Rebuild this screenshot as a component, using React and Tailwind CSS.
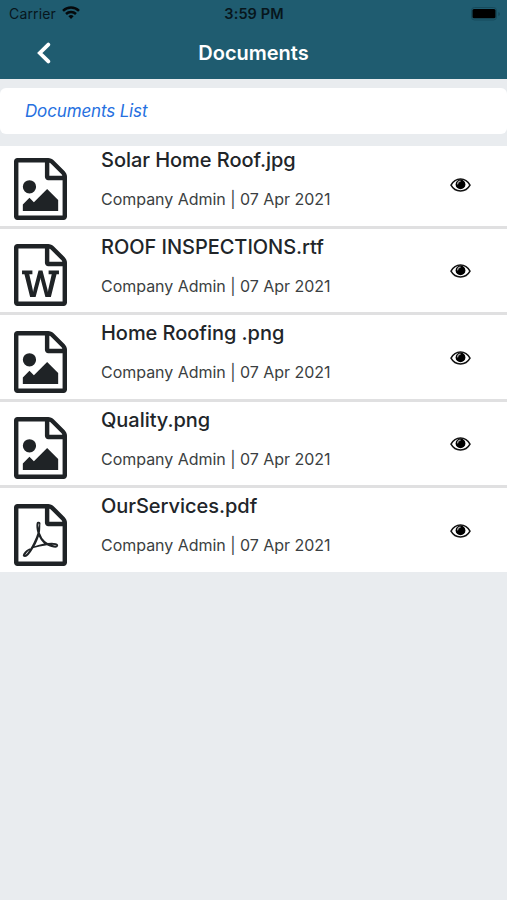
import React from "react";

const documents = [
  { id: 1, name: "Solar Home Roof.jpg", type: "image" },
  { id: 2, name: "ROOF INSPECTIONS.rtf", type: "word" },
  { id: 3, name: "Home Roofing .png", type: "image" },
  { id: 4, name: "Quality.png", type: "image" },
  { id: 5, name: "OurServices.pdf", type: "pdf" },
];

const filePage =
  "M1468 380q28 28 48 76t20 88v1152q0 40-28 68t-68 28h-1344q-40 0-68-28t-28-68v-1600q0-40 28-68t68-28h896q40 0 88 20t76 48zM1024 136v376h376q-10-29-22-41l-313-313q-12-12-41-22zM1408 1664v-1024h-416q-40 0-68-28t-28-68v-416h-768v1536h1280z";

const fileMarks = {
  image:
    "M1280 1216v320h-1024v-192l192-192 128 128 384-384zM448 1024q-80 0-136-56t-56-136 56-136 136-56 136 56 56 136-56 136-136 56z",
  word: "M233 768v107h70l164 661h159l128-485q7-20 10-46 2-16 2-24h4l3 24q1 3 3.5 20t5.5 26l128 485h159l164-661h70v-107h-300v107h90l-99 438q-5 20-7 46l-2 21h-4q0-3-.5-6.5t-1.5-8-1-6.5q-1-5-4-21t-5-25l-144-545h-114l-144 545q-2 9-4.5 24.5t-3.5 21.5l-4 21h-4l-2-21q-2-26-7-46l-99-438h90v-107h-300z",
  pdf: "M894 1070q33 26 84 56 59-7 117-7 147 0 177 49 16 22 2 52 0 1-1 2l-2 2v1q-6 38-71 38-48 0-115-20t-130-53q-221 24-392 83-153 262-242 262-15 0-28-7l-24-12q-1-1-6-5-10-10-6-36 9-40 56-91.5t132-96.5q14-9 23 6 2 2 2 4 52-85 107-197 68-136 104-262-24-82-30.5-159.5t6.5-127.5q11-40 42-40h22q23 0 35 15 18 21 9 68-2 6-4 8 1 3 1 8v30q-2 123-14 192 55 164 146 238zm-576 411q52-24 137-158-51 40-87.5 84t-49.5 74zm398-920q-15 42-2 132 1-7 7-44 0-3 7-43 1-4 4-8-1-1-1-2t-1-2-1-3q-1-22-13-36 0 1-1 2v2zm-124 661q135-54 284-81-2-1-13-9.5t-16-13.5q-76-67-127-176-27 86-83 197-30 56-45 83zm646-16q-24-24-140-24 76 28 124 28 14 0 18-1 0-1-2-3z",
};

const FileIcon = ({ type }) => (
  <svg viewBox="0 0 1536 1792" className="w-[53px] h-[62px] shrink-0 fill-[#1f2326]">
    <path d={filePage} />
    <path d={fileMarks[type]} />
  </svg>
);

const EyeIcon = () => (
  <svg viewBox="0 0 21 14" className="w-[21px] h-[14px]" fill="none">
    <path d="M1 7.2C3 3.4 6.4 1 10.5 1S18 3.4 20 7.2C18 10.8 14.6 13 10.5 13S3 10.8 1 7.2z" stroke="#111" strokeWidth="1.5" />
    <circle cx="10.5" cy="6.4" r="4.9" fill="#000" />
    <path d="M7.6 5.9a3 3 0 0 1 2.6-2.7" stroke="#a3a3a3" strokeWidth="1.2" strokeLinecap="round" />
  </svg>
);

const StatusBar = () => (
  <div className="h-[27px] grid grid-cols-3 items-center pl-[9px] pr-[6px] text-[14.5px] text-[#07161c]">
    <div className="flex items-center gap-[6px]">
      <span className="text-[14px] tracking-[0.15px]">Carrier</span>
      <svg viewBox="0 0 18 13" className="w-[18px] h-[13px] -mt-[2px]" fill="none" stroke="#05090b" strokeWidth="2.5">
        <path d="M1 4.8a11.5 11.5 0 0 1 16 0" />
        <path d="M4 8a7.2 7.2 0 0 1 10 0" />
        <path d="M6.4 10.3a3.8 3.8 0 0 1 5.2 0L9 13z" fill="#05090b" stroke="none" />
      </svg>
    </div>
    <span className="text-center font-semibold tracking-[0.1px] -ml-[2px]">3:59 PM</span>
    <svg viewBox="0 0 30 14" className="w-[30px] h-[14px] justify-self-end -ml-px">
      <rect x="0.5" y="0.5" width="25" height="12.5" rx="3" fill="none" stroke="#174b5c" />
      <rect x="1.5" y="2" width="23" height="9.3" rx="1.5" fill="#000" />
      <path d="M27.3 5v4q1.6-.5 1.6-2t-1.6-2z" fill="#17495a" />
    </svg>
  </div>
);

const App = () => {
  return (
    <div className="min-h-screen bg-[#e9ecef] font-['Inter',sans-serif] text-[#212529]">
      <header className="h-[79px] bg-[#1f5c70]">
        <StatusBar />
        <div className="h-[51px] grid grid-cols-3 items-center">
          <button className="ml-[37px] w-4" aria-label="Back">
            <svg
              viewBox="0 0 14 22"
              className="w-[14px] h-[22px]"
              fill="none"
              stroke="#fff"
              strokeWidth="3.8"
              strokeLinecap="round"
            >
              <path d="M11.3 2.6L2.8 11l8.5 8.400" />
            </svg>
          </button>
          <h1 className="text-center text-xl font-semibold text-white">Documents</h1>
        </div>
      </header>

      <div className="mt-[9px] h-[46px] flex items-center rounded-md bg-white pl-[25px] pt-[2px]">
        <span className="text-[17px] tracking-[-0.15px] italic text-[#2670e0]">Documents List</span>
      </div>

      <ul className="mt-3">
        {documents.map((doc) => (
          <li
            key={doc.id}
            className="h-[86.5px] first:h-[82.5px] last:h-[83.5px] flex items-end border-b-[3px] last:border-b-0 border-[#e0e0e1] bg-white pl-[14px] pr-[36px]"
          >
            <div className="h-[68px] flex items-start">
              <FileIcon type={doc.type} />
            </div>
            <div className="ml-[34px] h-[77.5px] flex-1 flex flex-col whitespace-nowrap">
              <h2 className="text-xl leading-6 font-medium tracking-[-0.04px]">{doc.name}</h2>
              <p className="mt-[17px] text-base leading-5 tracking-[-0.03px] text-[#3b3f42]">
                Company Admin | 07 Apr 2021
              </p>
            </div>
            <button className="h-[48px] flex items-start" aria-label="View document">
              <EyeIcon />
            </button>
          </li>
        ))}
      </ul>
    </div>
  );
};

export default App;
